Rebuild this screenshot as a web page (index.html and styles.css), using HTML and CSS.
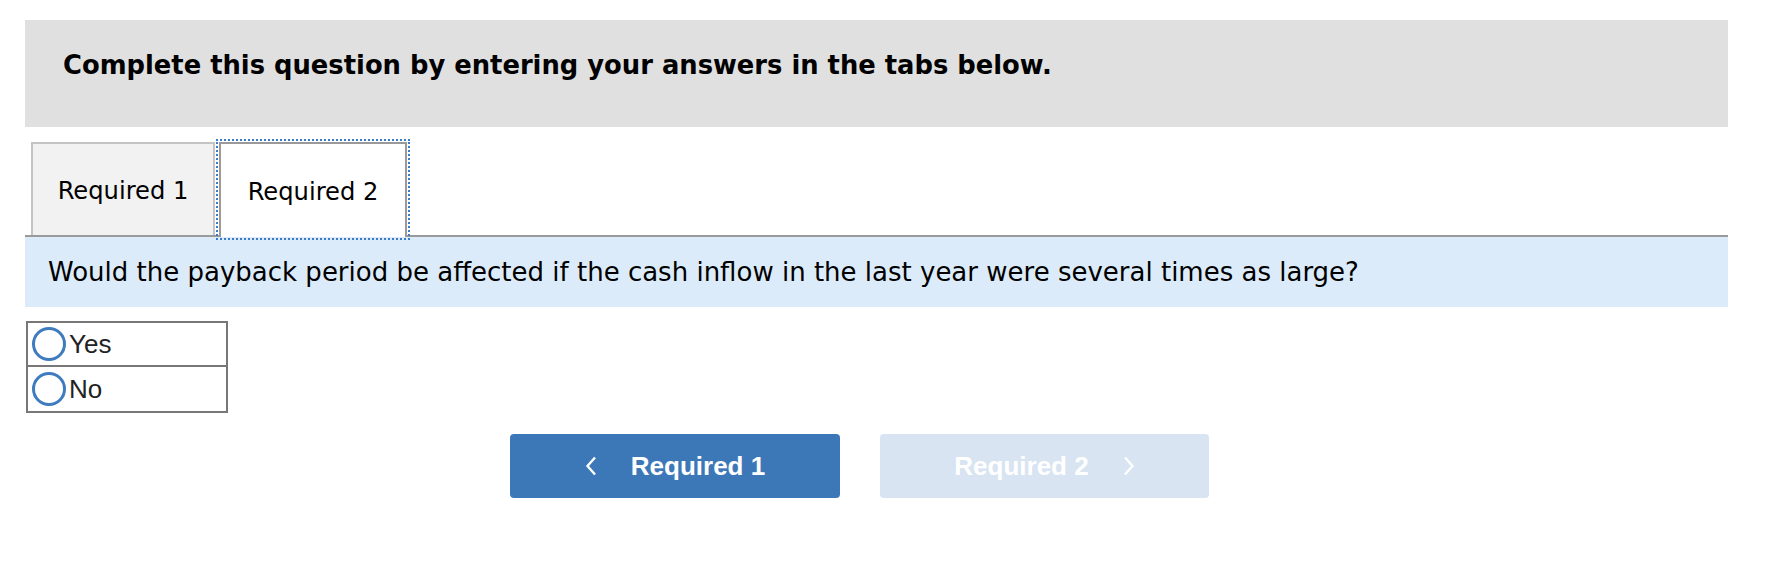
FILE: index.html
```html
<!DOCTYPE html>
<html>
<head>
<meta charset="utf-8">
<link rel="stylesheet" href="styles.css">
</head>
<body>
<div class="page">
  <div class="header">Complete this question by entering your answers in the tabs below.</div>
  <div class="tabs">
    <div class="tab">Required 1</div>
    <div class="tab active">Required 2</div>
  </div>
  <div class="panel">Would the payback period be affected if the cash inflow in the last year were several times as large?</div>
  <table class="choices">
    <tr><td><span class="radio"></span><span class="label">Yes</span></td></tr>
    <tr><td><span class="radio"></span><span class="label">No</span></td></tr>
  </table>
  <div class="nav">
    <button class="btn prev"><svg class="chev" width="12" height="20" viewBox="0 0 12 20"><polyline points="10,1.5 2.5,10 10,18.5" fill="none" stroke="#fff" stroke-width="2.4"/></svg><span>Required 1</span></button>
    <button class="btn next disabled"><span>Required 2</span><svg class="chev" width="12" height="20" viewBox="0 0 12 20"><polyline points="2,1.5 9.5,10 2,18.5" fill="none" stroke="#fff" stroke-width="2.4"/></svg></button>
  </div>
</div>
</body>
</html>
```

FILE: styles.css
```css
html, body {
  margin: 0;
  padding: 0;
  background: #fff;
}
.page {
  width: 1703px;
  margin-left: 25px;
  padding-top: 20px;
  font-family: "DejaVu Sans", Verdana, sans-serif;
  color: #000;
}
.header {
  height: 107px;
  box-sizing: border-box;
  background: #e0e0e0;
  padding: 30px 0 0 38px;
  font-size: 25.8px;
  line-height: 30px;
  font-weight: bold;
}
.tabs {
  display: flex;
  margin-top: 15px;
  padding-left: 6px;
  gap: 4px;
  height: 93px;
  position: relative;
  z-index: 1;
}
.tab {
  width: 184px;
  box-sizing: border-box;
  height: 93px;
  background: #f2f2f2;
  border: 2px solid #c4c4c4;
  border-bottom: none;
  display: flex;
  align-items: center;
  justify-content: center;
  font-size: 24.2px;
  padding-top: 2px;
}
.tab.active {
  width: 188px;
  height: 95px;
  background: #fff;
  border-color: #9a9a9a;
  outline: 2px dotted #3b7bc8;
  outline-offset: 1px;
}
.panel {
  background: #dbebf9;
  border-top: 2px solid #9a9a9a;
  height: 70px;
  padding-left: 23px;
  font-size: 26px;
  line-height: 70px;
}
.choices {
  margin-top: 14px;
  margin-left: 1px;
  border-collapse: collapse;
  width: 202px;
}
.choices td {
  border: 2px solid #777;
  height: 42px;
  padding: 0 0 0 4px;
  display: flex;
  align-items: center;
  font-family: "Liberation Sans", Arial, sans-serif;
  font-size: 26px;
  color: #222;
}
.choices tr + tr td {
  border-top: none;
  height: 44px;
}
.radio {
  width: 28px;
  height: 28px;
  border: 3px solid #3e7bbf;
  border-radius: 50%;
  flex: none;
}
.label {
  margin-left: 3px;
}
.nav {
  display: flex;
  gap: 40px;
  margin-top: 21px;
  padding-left: 485px;
}
.btn {
  width: 330px;
  height: 64px;
  border: none;
  border-radius: 4px;
  background: #3c78b8;
  color: #fff;
  font-family: "Liberation Sans", Arial, sans-serif;
  font-weight: bold;
  font-size: 26px;
  display: flex;
  align-items: center;
  justify-content: center;
  gap: 34px;
  padding: 0;
}
.btn.disabled {
  width: 329px;
  background: #d8e4f1;
}
.chev {
  display: block;
}
```
